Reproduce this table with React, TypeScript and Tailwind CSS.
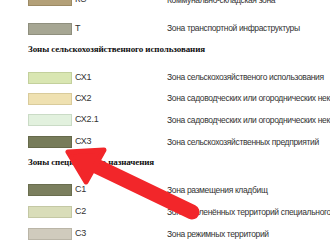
import React from "react"

interface Zone {
  code: string
  color: string
  border: string
  label: string
}

const topZones: Zone[] = [
  { code: "КС", color: "#b3a078", border: "#9c8a64", label: "Коммунально-складская зона" },
  { code: "Т", color: "#a6a693", border: "#8f8f7e", label: "Зона транспортной инфраструктуры" },
]

const agroZones: Zone[] = [
  { code: "СХ1", color: "#d9e6b2", border: "#c3d09c", label: "Зона сельскохозяйственого использования" },
  { code: "СХ2", color: "#efe1b1", border: "#d9cb9b", label: "Зона садоводческих или огороднических некоммерческих товариществ" },
  { code: "СХ2.1", color: "#e2f1de", border: "#cadbc6", label: "Зона садоводческих или огороднических некоммерческих товариществ" },
  { code: "СХ3", color: "#777c5a", border: "#666a4b", label: "Зона сельскохозяйственных предприятий" },
]

const specialZones: Zone[] = [
  { code: "С1", color: "#7b7f5e", border: "#6a6e4f", label: "Зона размещения кладбищ" },
  { code: "С2", color: "#d9ddb9", border: "#c4c8a4", label: "Зона озеленённых территорий специального назначения" },
  { code: "С3", color: "#d0cbbd", border: "#bab5a7", label: "Зона режимных территорий" },
]

const ZoneRow = ({ zone, h }: { zone: Zone; h: string }) => (
  <div className={`flex flex-row items-center whitespace-nowrap pl-[28px] ${h}`}>
    <div
      className="w-[44px] h-[12px] shrink-0 border"
      style={{ backgroundColor: zone.color, borderColor: zone.border }}
    />
    <div className="w-[95px] shrink-0 pl-[3px] text-[9px] text-[#333] tracking-[-0.2px]">{zone.code}</div>
    <div className="text-[8.5px] text-[#333] tracking-[-0.35px]">{zone.label}</div>
  </div>
)

const Heading = ({ children, className }: { children: React.ReactNode; className: string }) => (
  <div
    className={`flex items-center pl-[28px] whitespace-nowrap font-bold text-[9px] tracking-[-0.1px] text-[#111] ${className}`}
    style={{ fontFamily: '"Liberation Serif", serif' }}
  >
    {children}
  </div>
)

// red pointer drawn over the legend
const Pointer = () => (
  <svg className="absolute inset-0 pointer-events-none" width="330" height="248" viewBox="0 0 330 248">
    <g fill="#f2262a" stroke="#f2262a" strokeLinejoin="round" strokeLinecap="round">
      <line x1="92" y1="164" x2="192" y2="212" strokeWidth="15" />
      <polygon points="68,152 104,150 86,182" strokeWidth="5" />
    </g>
  </svg>
)

export default function App() {
  return (
    <div
      className="relative w-[330px] h-[248px] overflow-hidden bg-white"
      style={{ fontFamily: '"Liberation Sans", Arial, sans-serif' }}
    >
      <div className="flex flex-col mt-[-14px]">
        <ZoneRow zone={topZones[0]} h="h-[28px]" />
        <ZoneRow zone={topZones[1]} h="h-[29px]" />
        <Heading className="h-[14px]">Зоны сельскохозяйственного использования</Heading>
        <div className="flex flex-col mt-[10px]">
          <ZoneRow zone={agroZones[0]} h="h-[21px]" />
          <ZoneRow zone={agroZones[1]} h="h-[21px]" />
          <ZoneRow zone={agroZones[2]} h="h-[22px]" />
          <ZoneRow zone={agroZones[3]} h="h-[22px]" />
        </div>
        <Heading className="h-[14px] mt-[3px]">Зоны специального назначения</Heading>
        <div className="flex flex-col mt-[9px]">
          {specialZones.map(z => (
            <ZoneRow key={z.code} zone={z} h="h-[22px]" />
          ))}
        </div>
      </div>
      <Pointer />
    </div>
  )
}
